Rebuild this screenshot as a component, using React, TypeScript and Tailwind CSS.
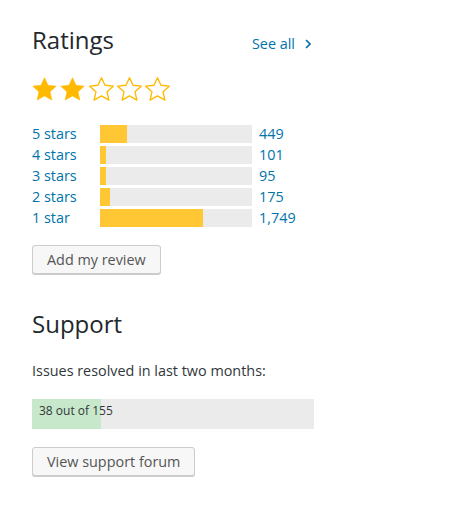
import React from 'react';

const ratings = [
  { label: '5 stars', count: 449 },
  { label: '4 stars', count: 101 },
  { label: '3 stars', count: 95 },
  { label: '2 stars', count: 175 },
  { label: '1 star', count: 1749 },
];

const total = ratings.reduce((sum, r) => sum + r.count, 0);

const Star: React.FC<{ filled: boolean }> = ({ filled }) => (
  <svg className="w-[25px] h-[24px]" viewBox="1 1 22 21.2">
    <polygon
      points="12,1.6 15.1,8.3 22.4,9.1 16.9,14.1 18.5,21.4 12,17.7 5.5,21.4 7.1,14.1 1.6,9.1 8.9,8.3"
      fill={filled ? '#ffb900' : 'none'}
      stroke="#ffb900"
      strokeWidth={filled ? 0.5 : 1.2}
      strokeLinejoin="round"
    />
  </svg>
);

const WpButton: React.FC<{ children: React.ReactNode }> = ({ children }) => (
  <button className="h-[29px] px-[14px] rounded-[3px] border border-[#cccccc] bg-[#f7f7f7] text-[#555555] text-[14.4px] leading-[27px] shadow-[0_1px_0_#cccccc]">
    {children}
  </button>
);

export default function App() {
  return (
    <div className="min-h-screen bg-white font-['Open_Sans',sans-serif] text-[#32373c]">
      <div className="w-[282px] ml-[32px] pt-[25px]">
        {/* Ratings */}
        <section>
          <div className="flex items-baseline justify-between">
            <h3 className="text-[24px] leading-[30px] font-normal text-[#23282d]">Ratings</h3>
            <a href="#" className="flex items-center gap-[10px] mr-[3px] text-[14.4px] text-[#0073aa]">
              See all
              <svg className="w-[6px] h-[10px]" viewBox="0 0 6 10" fill="none">
                <path d="M1 1l4 4-4 4" stroke="#0073aa" strokeWidth={1.6} />
              </svg>
            </a>
          </div>

          <div className="flex gap-[3.3px] mt-[22px]">
            {[0, 1, 2, 3, 4].map((i) => (
              <Star key={i} filled={i < 2} />
            ))}
          </div>

          <ul className="mt-[24px] flex flex-col gap-[3px]">
            {ratings.map((r) => (
              <li key={r.label} className="flex items-center h-[18px] text-[14.4px] leading-[18px]">
                <a href="#" className="w-[68px] text-[#0073aa]">{r.label}</a>
                <div className="w-[152px] h-[18px] bg-[#ebebeb]">
                  <div className="h-full bg-[#ffc733]" style={{ width: `${(r.count / total) * 100}%` }} />
                </div>
                <span className="ml-[7px] text-[#0073aa]">{r.count.toLocaleString('en-US')}</span>
              </li>
            ))}
          </ul>

          <div className="mt-[18px]">
            <WpButton>Add my review</WpButton>
          </div>
        </section>

        {/* Support */}
        <section className="mt-[35px]">
          <h3 className="text-[24px] leading-[30px] font-normal text-[#23282d]">Support</h3>
          <p className="mt-[21px] text-[14.4px] leading-[21px] text-[#32373c]">Issues resolved in last two months:</p>

          <div className="relative mt-[18px] h-[30px] bg-[#ebebeb]">
            <div className="absolute inset-y-0 left-0 bg-[#c7e8ca]" style={{ width: `${(38 / 155) * 100}%` }} />
            <span className="relative block px-[7px] text-[12px] leading-[24px] text-[#32373c]">38 out of 155</span>
          </div>

          <div className="mt-[18px]">
            <WpButton>View support forum</WpButton>
          </div>
        </section>
      </div>
    </div>
  );
}
